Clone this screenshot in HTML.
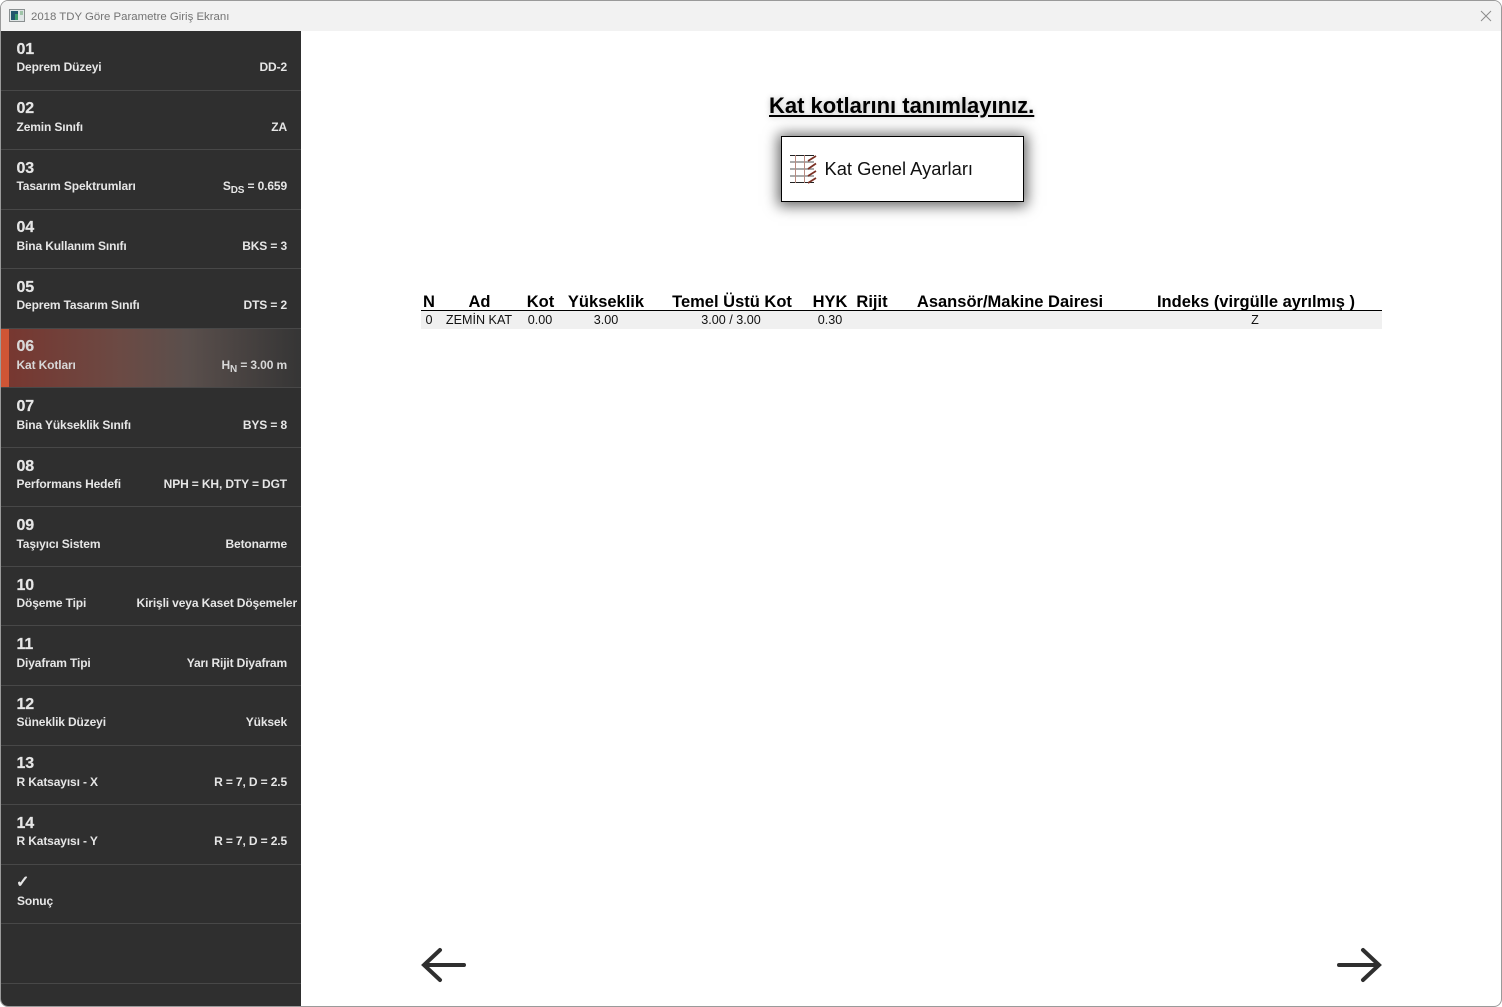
<!DOCTYPE html>
<html lang="tr"><head><meta charset="utf-8"><title>2018 TDY Göre Parametre Giriş Ekranı</title>
<style>
html,body{margin:0;padding:0;background:#fff}
body{width:1502px;height:1007px;position:relative;overflow:hidden;font-family:"Liberation Sans",sans-serif}
#win{position:absolute;left:0;top:0;width:1500px;height:1005px;border:1px solid #9a9a9a;border-radius:8px;overflow:hidden;background:#fff}
#tb{position:absolute;left:0;top:0;width:1500px;height:30px;background:#f2f2f2}
#tt{position:absolute;left:30px;top:9px;font-size:11.4px;line-height:14px;color:#737373;white-space:nowrap}
#side{position:absolute;left:0;top:30px;width:300px;height:975px;background:#2f2f2f}
.sep{position:absolute;left:0;width:300px;height:1px;background:#484848}
.n{position:absolute;left:15.5px;margin-top:2px;font-size:16px;line-height:18px;font-weight:bold;color:#e6e6e6;white-space:nowrap;letter-spacing:-.2px;-webkit-text-stroke:.2px #e6e6e6}
.l,.r{position:absolute;margin-top:1px;font-size:12px;line-height:14px;font-weight:bold;color:#e6e6e6;white-space:nowrap;letter-spacing:-.13px}
.l{left:15.5px}.r{right:14px}
sub{font-size:10px;line-height:0;vertical-align:-3px}
#act{position:absolute;left:0;top:298px;width:300px;height:58px;background:linear-gradient(90deg,#78362f 0,#6b4a44 40%,#5a4f4c 62%,#353535 100%)}
#bar{position:absolute;left:0;top:298px;width:8px;height:58px;background:#cf5535}
h1{position:absolute;left:768px;top:92px;margin:0;font-size:22px;line-height:26px;font-weight:bold;color:#000;text-decoration:underline;white-space:nowrap;text-shadow:0 0 6px rgba(0,0,0,.25)}
#btn{position:absolute;left:780px;top:135px;width:241px;height:64px;border:1px solid #000;background:#fff;box-shadow:0 1px 13px 3px rgba(0,0,0,.6)}
#btn span{position:absolute;left:42.5px;top:21px;font-size:18.35px;line-height:22px;color:#111;white-space:nowrap}
.h{position:absolute;top:292px;font-size:16.5px;line-height:18px;font-weight:bold;color:#000;white-space:nowrap;transform:translateX(-50%)}
.c{position:absolute;top:312px;font-size:12.6px;line-height:14px;color:#111;white-space:nowrap;transform:translateX(-50%)}
#hl{position:absolute;left:420px;top:309px;width:961px;height:1px;background:#000}
#rw{position:absolute;left:420px;top:310px;width:961px;height:18px;background:#f0f0f0}
svg{position:absolute}
</style></head><body>
<div id="win">
<div id="tb"></div>
<svg style="left:8px;top:8px" width="16" height="13" viewBox="0 0 16 13"><rect x=".5" y=".5" width="15" height="12" fill="#dfe5e5" stroke="#8a8f90"/><rect x="2" y="2" width="7" height="9" fill="#24566e"/><rect x="6" y="5" width="3" height="6" fill="#3d9a6c"/><rect x="11" y="2" width="3" height="4" fill="#9fc4a8"/></svg>
<div id="tt">2018 TDY Göre Parametre Giriş Ekranı</div>
<svg style="left:1479px;top:9px" width="12" height="12" viewBox="0 0 12 12"><path d="M1 1L11 11M11 1L1 11" stroke="#8c8c8c" stroke-width="1" fill="none"/></svg>
<div id="side">
<div id="act"></div><div id="bar"></div>
<div class="sep" style="top:59px"></div><div class="sep" style="top:118px"></div><div class="sep" style="top:178px"></div><div class="sep" style="top:237px"></div><div class="sep" style="top:297px"></div><div class="sep" style="top:356px"></div><div class="sep" style="top:416px"></div><div class="sep" style="top:475px"></div><div class="sep" style="top:535px"></div><div class="sep" style="top:594px"></div><div class="sep" style="top:654px"></div><div class="sep" style="top:714px"></div><div class="sep" style="top:773px"></div><div class="sep" style="top:833px"></div><div class="sep" style="top:892px"></div><div class="sep" style="top:952px"></div>

<div class="n" style="top:8px">01</div><div class="l" style="top:28px">Deprem Düzeyi</div><div class="r" style="top:28px">DD-2</div>
<div class="n" style="top:67px">02</div><div class="l" style="top:88px">Zemin Sınıfı</div><div class="r" style="top:88px">ZA</div>
<div class="n" style="top:127px">03</div><div class="l" style="top:147px">Tasarım Spektrumları</div><div class="r" style="top:147px">S<sub>DS</sub> = 0.659</div>
<div class="n" style="top:186px">04</div><div class="l" style="top:207px">Bina Kullanım Sınıfı</div><div class="r" style="top:207px">BKS = 3</div>
<div class="n" style="top:246px">05</div><div class="l" style="top:266px">Deprem Tasarım Sınıfı</div><div class="r" style="top:266px">DTS = 2</div>
<div class="n" style="top:305px;color:#d8d8d8;-webkit-text-stroke-color:#d8d8d8">06</div><div class="l" style="top:326px;color:#d8d8d8">Kat Kotları</div><div class="r" style="top:326px;color:#d8d8d8">H<sub>N</sub> = 3.00 m</div>
<div class="n" style="top:365px">07</div><div class="l" style="top:386px">Bina Yükseklik Sınıfı</div><div class="r" style="top:386px">BYS = 8</div>
<div class="n" style="top:425px">08</div><div class="l" style="top:445px">Performans Hedefi</div><div class="r" style="top:445px">NPH = KH, DTY = DGT</div>
<div class="n" style="top:484px">09</div><div class="l" style="top:505px">Taşıyıcı Sistem</div><div class="r" style="top:505px">Betonarme</div>
<div class="n" style="top:544px">10</div><div class="l" style="top:564px">Döşeme Tipi</div><div class="r" style="top:564px;right:4px">Kirişli veya Kaset Döşemeler</div>
<div class="n" style="top:603px">11</div><div class="l" style="top:624px">Diyafram Tipi</div><div class="r" style="top:624px">Yarı Rijit Diyafram</div>
<div class="n" style="top:663px">12</div><div class="l" style="top:683px">Süneklik Düzeyi</div><div class="r" style="top:683px">Yüksek</div>
<div class="n" style="top:722px">13</div><div class="l" style="top:743px">R Katsayısı - X</div><div class="r" style="top:743px">R = 7, D = 2.5</div>
<div class="n" style="top:782px">14</div><div class="l" style="top:802px">R Katsayısı - Y</div><div class="r" style="top:802px">R = 7, D = 2.5</div>
<div class="n" style="top:840px;left:15px;font-family:'DejaVu Sans',sans-serif;-webkit-text-stroke:.8px #e6e6e6">✓</div><div class="l" style="top:862px;left:16px">Sonuç</div>
</div>

<h1>Kat kotlarını tanımlayınız.</h1>
<div id="btn"><svg style="left:8px;top:18px" width="28" height="30" viewBox="0 0 28 30"><path d="M0 .5H24M0 27.5H24" stroke="#222" stroke-width="1" fill="none"/><path d="M0 7H24M0 14H24M0 21H24" stroke="#8e8e8e" stroke-width="1.5" fill="none"/><path d="M5.5 0V28M14.5 0V28" stroke="#b98a80" stroke-width="1" fill="none"/><path d="M18 6L26 1M18 14L26 8.5M18 21L26 16M18 28L26 23" stroke="#7a3024" stroke-width="1.7" fill="none"/></svg><span>Kat Genel Ayarları</span></div>

<div class="h" style="left:428px">N</div><div class="h" style="left:478.5px">Ad</div><div class="h" style="left:539.5px">Kot</div><div class="h" style="left:605px">Yükseklik</div><div class="h" style="left:731px">Temel Üstü Kot</div><div class="h" style="left:829px">HYK</div><div class="h" style="left:871px">Rijit</div><div class="h" style="left:1009px">Asansör/Makine Dairesi</div><div class="h" style="left:1255px">Indeks (virgülle ayrılmış )</div>
<div id="rw"></div><div id="hl"></div>
<div class="c" style="left:428px">0</div><div class="c" style="left:478px">ZEMİN KAT</div><div class="c" style="left:539px">0.00</div><div class="c" style="left:605px">3.00</div><div class="c" style="left:730px">3.00 / 3.00</div><div class="c" style="left:829px">0.30</div><div class="c" style="left:1254px">Z</div>

<svg style="left:415px;top:940px" width="56" height="48" viewBox="0 0 56 48"><path d="M48 24H9M24 9L8 24L24 39" stroke="#2f2f2f" stroke-width="4" fill="none" stroke-linecap="round"/></svg>
<svg style="left:1330px;top:940px" width="56" height="48" viewBox="0 0 56 48"><path d="M8 24H47.5M32 9L48 24L32 39" stroke="#2f2f2f" stroke-width="4" fill="none" stroke-linecap="round"/></svg>
</div>
</body></html>
